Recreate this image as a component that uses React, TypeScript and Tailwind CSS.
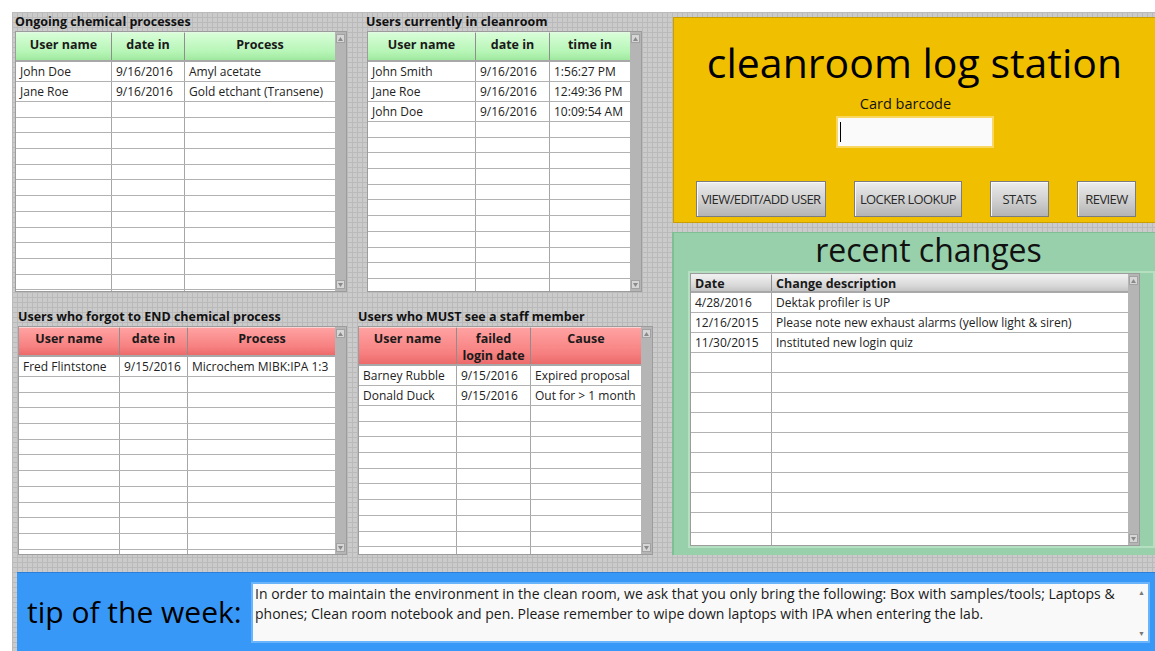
import React from "react";

type Col = { label: React.ReactNode; w: string };

const grid =
  "bg-[#cbcbcb] bg-[linear-gradient(to_right,#bababa_1px,transparent_1px),linear-gradient(to_bottom,#bababa_1px,transparent_1px)] bg-size-[5px_5px]";

function Arrow({ down = false }: { down?: boolean }) {
  return (
    <div className="flex h-[9px] w-[9px] items-center justify-center border border-[#a2a2a2] bg-[#d6d6d6]">
      <svg width="5" height="4" viewBox="0 0 5 4">
        {down ? <path d="M0 0h5L2.5 4z" fill="#8a8a8a" /> : <path d="M0 4h5L2.5 0z" fill="#8a8a8a" />}
      </svg>
    </div>
  );
}

function ScrollBar() {
  return (
    <div className="flex w-[11px] shrink-0 flex-col items-center justify-between bg-[#b5b5b5] py-[2px]">
      <Arrow />
      <Arrow down />
    </div>
  );
}

type TableProps = {
  cols: Col[];
  rows: string[][];
  head: "green" | "red" | "gray";
  headH: string;
  rowH: string;
  emptyH: string;
  size: string;
  empties: number;
};

const heads = {
  green: "bg-[linear-gradient(to_bottom,#d8fdd8,#b6f5b6_70%,#9fe89f)] justify-center text-center pt-[3px]",
  red: "bg-[linear-gradient(to_bottom,#ffa2a2,#f78080_70%,#ec6a6a)] justify-center text-center pt-[2px]",
  gray: "bg-[linear-gradient(to_bottom,#f0f0f0,#d6d6d6_70%,#c4c4c4)] items-center px-[4px]",
};

function Table({ cols, rows, head, headH, rowH, emptyH, size, empties }: TableProps) {
  return (
    <div className={`flex border border-[#9c9c9c] bg-white ${size}`}>
      <div className="flex min-w-0 flex-1 flex-col overflow-hidden">
        <div className={`flex shrink-0 border-b-2 border-[#a8a8a8] ${headH}`}>
          {cols.map((c, i) => (
            <div
              key={i}
              className={`flex shrink-0 border-r border-t border-r-[#8e8e8e] border-t-white/70 text-[12.5px] font-bold leading-[17px] text-[#1a1a1a] ${c.w} ${heads[head]}`}
            >
              <span>{c.label}</span>
            </div>
          ))}
        </div>
        {rows.map((r, i) => (
          <div key={i} className={`flex shrink-0 border-b border-[#b2b2b2] ${rowH}`}>
            {r.map((cell, j) => (
              <div
                key={j}
                className={`flex shrink-0 items-center overflow-hidden whitespace-nowrap border-r border-[#a6a6a6] px-[4px] text-[12px] text-[#222] ${cols[j].w}`}
              >
                {cell}
              </div>
            ))}
          </div>
        ))}
        {Array.from({ length: empties }).map((_, i) => (
          <div key={i} className={`flex shrink-0 border-b border-[#b2b2b2] ${emptyH}`}>
            {cols.map((c, j) => (
              <div key={j} className={`shrink-0 border-r border-[#a6a6a6] ${c.w}`} />
            ))}
          </div>
        ))}
      </div>
      <ScrollBar />
    </div>
  );
}

function Title({ children }: { children: React.ReactNode }) {
  return <div className="h-[18px] whitespace-nowrap text-[12.5px] font-bold leading-[18px] text-[#111]">{children}</div>;
}

function Button({ label, w }: { label: string; w: string }) {
  return (
    <div
      className={`flex h-[36px] items-center justify-center border border-[#7c7c7c] bg-[linear-gradient(to_bottom,#ececec,#cfcfcf_55%,#b4b4b4)] pt-[2px] text-[13px] tracking-[-0.6px] text-[#2a2a2a] shadow-[inset_1px_1px_0_#f8f8f8] ${w}`}
    >
      {label}
    </div>
  );
}

export default function App() {
  return (
    <div className="h-[651px] w-[1155px] overflow-hidden bg-white pl-[12px] pt-[12px] font-['Open_Sans','Noto_Sans',sans-serif]">
      <div className={`flex h-[639px] w-[1143px] flex-col ${grid}`}>
        <div className="flex h-[548px] shrink-0">
          {/* left: four tables */}
          <div className="flex w-[660px] shrink-0 flex-col">
            <div className="flex h-[296px] shrink-0 pt-[1px]">
              <div className="ml-[3px] flex flex-col">
                <Title>Ongoing chemical processes</Title>
                <Table
                  size="w-[332px] h-[261px]"
                  head="green"
                  headH="h-[30px]"
                  rowH="h-[20px]"
                  emptyH="h-[15.7px]"
                  empties={13}
                  cols={[
                    { label: "User name", w: "w-[96px]" },
                    { label: "date in", w: "w-[73px]" },
                    { label: "Process", w: "w-[151px]" },
                  ]}
                  rows={[
                    ["John Doe", "9/16/2016", "Amyl acetate"],
                    ["Jane Roe", "9/16/2016", "Gold etchant (Transene)"],
                  ]}
                />
              </div>
              <div className="ml-[20px] flex flex-col">
                <div className="-ml-[1px]">
                  <Title>Users currently in cleanroom</Title>
                </div>
                <Table
                  size="w-[275px] h-[261px]"
                  head="green"
                  headH="h-[30px]"
                  rowH="h-[20px]"
                  emptyH="h-[15.7px]"
                  empties={12}
                  cols={[
                    { label: "User name", w: "w-[108px]" },
                    { label: "date in", w: "w-[74px]" },
                    { label: "time in", w: "w-[81px]" },
                  ]}
                  rows={[
                    ["John Smith", "9/16/2016", "1:56:27 PM"],
                    ["Jane Roe", "9/16/2016", "12:49:36 PM"],
                    ["John Doe", "9/16/2016", "10:09:54 AM"],
                  ]}
                />
              </div>
            </div>
            <div className="flex">
              <div className="ml-[6px] flex flex-col">
                <Title>Users who forgot to END chemical process</Title>
                <Table
                  size="w-[329px] h-[229px]"
                  head="red"
                  headH="h-[30px]"
                  rowH="h-[20px]"
                  emptyH="h-[15.7px]"
                  empties={12}
                  cols={[
                    { label: "User name", w: "w-[101px]" },
                    { label: "date in", w: "w-[68px]" },
                    { label: "Process", w: "w-[149px]" },
                  ]}
                  rows={[["Fred Flintstone", "9/15/2016", "Microchem MIBK:IPA 1:3"]]}
                />
              </div>
              <div className="ml-[11px] flex flex-col">
                <Title>Users who MUST see a staff member</Title>
                <Table
                  size="w-[295px] h-[229px]"
                  head="red"
                  headH="h-[39px]"
                  rowH="h-[20px]"
                  emptyH="h-[15.7px]"
                  empties={10}
                  cols={[
                    { label: "User name", w: "w-[98px]" },
                    { label: <>failed<br />login date</>, w: "w-[74px]" },
                    { label: "Cause", w: "w-[111px]" },
                  ]}
                  rows={[
                    ["Barney Rubble", "9/15/2016", "Expired proposal"],
                    ["Donald Duck", "9/15/2016", "Out for > 1 month"],
                  ]}
                />
              </div>
            </div>
          </div>

          {/* right: log station and recent changes */}
          <div className="flex flex-1 flex-col">
            <div className="ml-[1px] mt-[5px] flex h-[206px] flex-col items-center border border-r-0 border-[#c99e00] bg-[#f0c000]">
              <div className="mt-[18px] h-[52px] text-[41px] leading-[52px] text-black">cleanroom log station</div>
              <div className="mt-[6px] -ml-[18px] text-[14.5px] leading-[20px] text-[#111]">Card barcode</div>
              <div className="mt-[2px] flex h-[32px] w-[158px] items-center border-2 border-[#f8d860] bg-[#fafafa] pl-[2px]">
                <div className="h-[20px] w-[1px] bg-black" />
              </div>
              <div className="mt-[33px] flex w-full gap-[28px] pl-[22px]">
                <Button label="VIEW/EDIT/ADD USER" w="w-[130px]" />
                <Button label="LOCKER LOOKUP" w="w-[108px]" />
                <Button label="STATS" w="w-[59px]" />
                <Button label="REVIEW" w="w-[59px]" />
              </div>
            </div>
            <div className="mt-[9px] flex h-[323px] flex-col border-l-2 border-t border-[#7fbf93] bg-[#97d0aa] pl-[14px]">
              <div className="h-[38px] pl-[14px] text-center text-[32px] leading-[34px] text-[#111]">recent changes</div>
              <div className="border-2 border-[#b4dfc0]">
                <Table
                  size="w-[450px] h-[273px]"
                  head="gray"
                  headH="h-[19px]"
                  rowH="h-[20px]"
                  emptyH="h-[20px]"
                  empties={10}
                  cols={[
                    { label: "Date", w: "w-[81px]" },
                    { label: "Change description", w: "w-[358px]" },
                  ]}
                  rows={[
                    ["4/28/2016", "Dektak profiler is UP"],
                    ["12/16/2015", "Please note new exhaust alarms (yellow light & siren)"],
                    ["11/30/2015", "Instituted new login quiz"],
                  ]}
                />
              </div>
            </div>
          </div>
        </div>

        {/* tip of the week */}
        <div className="ml-[5px] mt-[12px] flex flex-1 items-center border-t border-[#2a7fd8] bg-[#3898f8] pl-[10px]">
          <div className="w-[224px] shrink-0 whitespace-nowrap text-[30px] leading-[40px] text-black">tip of the week:</div>
          <div className="relative h-[61px] w-[899px] border-2 border-[#6ab4fb] bg-[#f9f9f9] px-[2px] text-[14px] leading-[20px] text-[#1a1a1a]">
            <div className="whitespace-nowrap">
              In order to maintain the environment in the clean room, we ask that you only bring the following: Box with samples/tools; Laptops &amp;
            </div>
            <div className="whitespace-nowrap">
              phones; Clean room notebook and pen. Please remember to wipe down laptops with IPA when entering the lab.
            </div>
            <div className="absolute right-[3px] top-[5px] text-[7px] leading-none text-[#777]">▲</div>
            <div className="absolute bottom-[4px] right-[3px] text-[7px] leading-none text-[#777]">▼</div>
          </div>
        </div>
      </div>
    </div>
  );
}
